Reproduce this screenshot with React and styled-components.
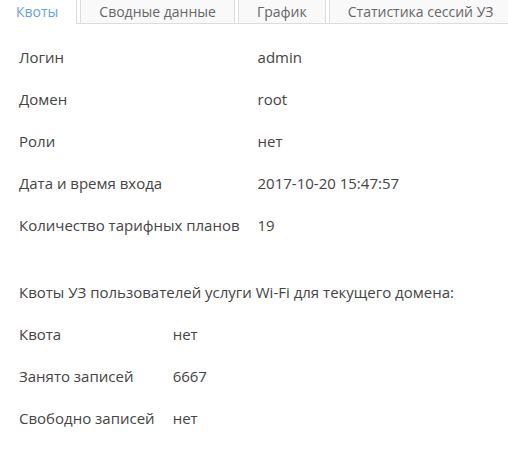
import React from 'react';
import styled, { createGlobalStyle } from 'styled-components';

const GlobalStyle = createGlobalStyle`
  body {
    margin: 0;
    background: #fff;
    font-family: "Open Sans", "Liberation Sans", sans-serif;
    font-size: 14px;
    color: #444;
  }
`;

const TabBar = styled.div`
  display: flex;
  height: 24px;
  overflow: hidden;
`;

const Tab = styled.div`
  flex: ${({ $grow }) => ($grow ? 1 : 'none')};
  display: flex;
  align-items: center;
  padding: ${({ $active }) => ($active ? '0 18px 1px 16px' : '0 18px 1px')};
  margin-left: ${({ $first }) => ($first ? 0 : '3px')};
  background: ${({ $active }) => ($active ? '#fff' : '#f9f9f9')};
  border-right: 1px solid #ddd;
  border-left: ${({ $first }) => ($first ? 'none' : '1px solid #ddd')};
  border-bottom: 1px solid ${({ $active }) => ($active ? '#fff' : '#ddd')};
  color: ${({ $active }) => ($active ? '#68a3e0' : '#666')};
  white-space: nowrap;
  cursor: pointer;
  position: relative;
  &::after {
    content: '';
    display: ${({ $first }) => ($first ? 'none' : 'block')};
    position: absolute;
    left: -5px;
    bottom: -1px;
    width: 4px;
    height: 1px;
    background: #ddd;
  }
`;

const Content = styled.div`
  padding: 23px 19px;
  font-size: 15px;
`;

const InfoGrid = styled.div`
  display: grid;
  grid-template-columns: max-content max-content;
  column-gap: 18px;
  row-gap: 22px;
`;

const Cell = styled.div`
  line-height: 20px;
  color: #444;
`;

const Heading = styled.div`
  margin: 47px 0 22px;
  line-height: 20px;
  color: #444;
`;

const main = [
  ['Логин', 'admin'],
  ['Домен', 'root'],
  ['Роли', 'нет'],
  ['Дата и время входа', '2017-10-20 15:47:57'],
  ['Количество тарифных планов', '19'],
];

const quota = [
  ['Квота', 'нет'],
  ['Занято записей', '6667'],
  ['Свободно записей', 'нет'],
];

const tabs = ['Квоты', 'Сводные данные', 'График', 'Статистика сессий УЗ'];

export default function App() {
  return (
    <>
      <GlobalStyle />
      <TabBar>
        {tabs.map((t, i) => (
          <Tab key={t} $active={i === 0} $first={i === 0} $grow={i === tabs.length - 1}>
            {t}
          </Tab>
        ))}
      </TabBar>
      <Content>
        <InfoGrid>
          {main.map(([k, v]) => (
            <React.Fragment key={k}>
              <Cell>{k}</Cell>
              <Cell>{v}</Cell>
            </React.Fragment>
          ))}
        </InfoGrid>
        <Heading>Квоты УЗ пользователей услуги Wi-Fi для текущего домена:</Heading>
        <InfoGrid>
          {quota.map(([k, v]) => (
            <React.Fragment key={k}>
              <Cell>{k}</Cell>
              <Cell>{v}</Cell>
            </React.Fragment>
          ))}
        </InfoGrid>
      </Content>
    </>
  );
}
